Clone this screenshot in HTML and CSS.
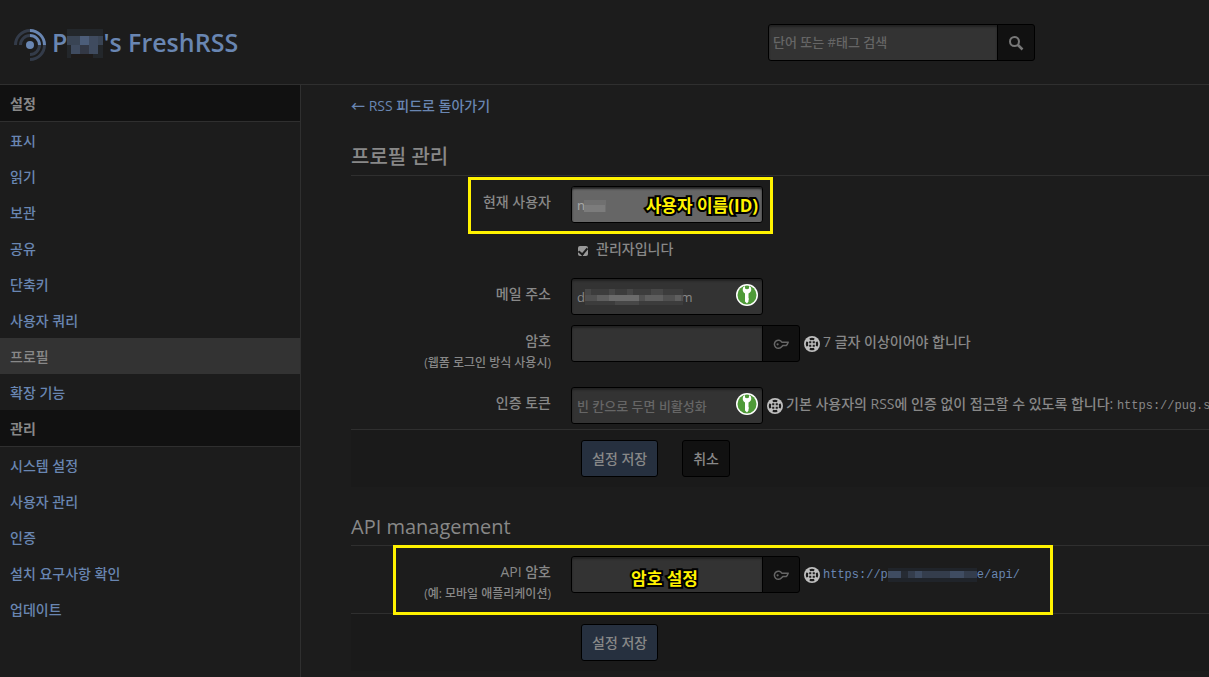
FILE: index.html
```html
<!DOCTYPE html>
<html lang="ko">
<head>
<meta charset="utf-8">
<title>프로필 관리</title>
<link rel="stylesheet" href="styles.css">
</head>
<body>
<svg class="defs" aria-hidden="true">
  <symbol id="i-help" viewBox="0 0 16 16">
    <circle cx="8" cy="8" r="8" fill="#bebebe"/>
    <g fill="#1c1c1c">
    <path d="M5.500 2.300Q8 1.200 10.500 2.300L10 4.300Q8 3.700 6 4.300zM5.500 13.700Q8 14.800 10.500 13.700L10 11.700Q8 12.300 6 11.700zM2.300 5.500Q1.200 8 2.300 10.500L4.300 10Q3.700 8 4.300 6zM13.700 5.500Q14.800 8 13.700 10.500L11.700 10Q12.300 8 11.700 6z"/>
    <path d="M5.200 5.200h2.100v2.100H5.200zM8.700 5.200h2.100v2.100H8.700zM5.200 8.700h2.100v2.100H5.200zM8.700 8.700h2.100v2.100H8.700z"/></g>
  </symbol>
  <symbol id="i-key" viewBox="0 0 16 16">
    <path d="M8.800 6.200A4 4 0 1 0 8.600 10.700L9.800 9.600h3.400l1-1.200 1-2.200z" fill="none" stroke="#666" stroke-width="1.500" stroke-linejoin="round"/>
    <circle cx="4.600" cy="8.300" r="1.100" fill="#666"/>
  </symbol>
  <symbol id="i-keepass" viewBox="0 0 22 22">
    <circle cx="11" cy="11" r="11" fill="#fff"/>
    <circle cx="11" cy="11" r="9.500" fill="#4f9a38"/>
    <path d="M7 3.500Q6 8 9 9.500V17.500L11 19.500L12.500 17.500V16L13 15L12.500 14V9.500Q16 8 15 3.500L13 2V4.500Q11 6 9 4.500V2z" fill="#fff"/>
  </symbol>
</svg>

<header class="header">
  <h1 class="title"><a href="#">
    <svg class="logo" viewBox="0 0 32 32" aria-hidden="true">
      <circle cx="16" cy="16" r="4" fill="#6986b2"/>
      <g fill="none" stroke-width="3" stroke="#6986b2">
        <path d="M16 6.500A9.500 9.500 0 0 1 25.500 16M16 1.500A14.500 14.500 0 0 1 30.500 16"/>
        <path opacity=".3" d="M6.500 16A9.500 9.500 0 0 1 16 6.500M1.500 16A14.500 14.500 0 0 1 16 1.500M16 25.500A9.500 9.500 0 0 0 25.500 16M16 30.500A14.500 14.500 0 0 0 30.500 16"/>
      </g>
    </svg>
    <span>P<svg class="mosaic-title" viewBox="0 0 36 29" aria-hidden="true"><path fill="#23272b" d="M0 0h36v29H0z"/><path fill="#1e1b1a" d="M4 25h22v4H4z"/><path fill="#394454" d="M0 7h36v9H0z"/><path fill="#3f4b5f" d="M4 16h9v9H4zM22 7h9v18h-9z"/><path fill="#333845" d="M13 16h9v9h-9z"/><path fill="#4c5d79" d="M13 7h9v9h-9z"/></svg>'s FreshRSS</span>
  </a></h1>
  <form class="search stick">
    <input type="search" class="search-box" placeholder="단어 또는 #태그 검색" aria-label="검색">
    <button type="button" class="btn icon-btn" aria-label="검색"><svg class="icon" viewBox="0 0 16 16"><circle cx="6.500" cy="6.500" r="4.500" fill="none" stroke="#777" stroke-width="2"/><path d="M10 10l4.500 4.500" stroke="#777" stroke-width="2.500"/></svg></button>
  </form>
</header>

<div class="page">
  <nav class="aside">
    <h2 class="nav-head">설정</h2>
    <a href="#">표시</a>
    <a href="#">읽기</a>
    <a href="#">보관</a>
    <a href="#">공유</a>
    <a href="#">단축키</a>
    <a href="#">사용자 쿼리</a>
    <a href="#" class="active">프로필</a>
    <a href="#">확장 기능</a>
    <h2 class="nav-head">관리</h2>
    <a href="#">시스템 설정</a>
    <a href="#">사용자 관리</a>
    <a href="#">인증</a>
    <a href="#">설치 요구사항 확인</a>
    <a href="#">업데이트</a>
  </nav>

  <main class="main">
    <a href="#" class="back">← RSS 피드로 돌아가기</a>

    <form class="section">
      <h2 class="legend">프로필 관리</h2>
      <div class="group">
        <label class="name" for="user">현재 사용자</label>
        <div class="controls">
          <div class="field">
            <input id="user" class="text" type="text" value="n" disabled>
            <svg class="mosaic-user" viewBox="0 0 22 12" aria-hidden="true"><path fill="#707070" d="M0 0h22v12H0z"/><path fill="#7c7c7c" d="M0 5h21v7H0z"/></svg>
            <span class="note note-end">사용자 이름(ID)</span>
          </div>
        </div>
        <div class="mark mark-user"></div>
      </div>
      <div class="group">
        <label class="check"><input type="checkbox" class="box" checked disabled>관리자입니다</label>
      </div>
      <div class="group">
        <label class="name" for="mail">메일 주소</label>
        <div class="controls">
          <div class="field">
            <input id="mail" class="text" type="text" value="d&nbsp;&nbsp;&nbsp;&nbsp;&nbsp;&nbsp;&nbsp;&nbsp;&nbsp;&nbsp;&nbsp;&nbsp;&nbsp;&nbsp;&nbsp;&nbsp;&nbsp;&nbsp;&nbsp;&nbsp;&nbsp;&nbsp;&nbsp;&nbsp;&nbsp;&nbsp;om">
            <svg class="mosaic-mail" viewBox="0 0 98 16" aria-hidden="true"><path fill="#3c3c3c" d="M0 0h98v16H0z"/><path fill="#474747" d="M0 0h6v12H0zM24 0h6v6h-6zM42 0h6v6h-6zM66 0h12v6H66zM30 12h24v4H30z"/><path fill="#505050" d="M0 6h98v6H0z"/><path fill="#5e5e5e" d="M12 6h12v6H12zM60 6h18v6H60zM90 6h6v6h-6z"/><path fill="#6b6b6b" d="M24 6h30v6H24z"/></svg>
            <svg class="keepass"><use href="#i-keepass"/></svg>
          </div>
        </div>
      </div>
      <div class="group">
        <label class="name" for="pass">암호<small>(웹폼 로그인 방식 사용시)</small></label>
        <div class="controls">
          <div class="field stick">
            <input id="pass" class="text" type="password">
            <button type="button" class="btn icon-btn" aria-label="암호 보기"><svg class="icon"><use href="#i-key"/></svg></button>
          </div>
          <p class="help"><svg class="icon"><use href="#i-help"/></svg><span>7 글자 이상이어야 합니다</span></p>
        </div>
      </div>
      <div class="group">
        <label class="name" for="token">인증 토큰</label>
        <div class="controls">
          <div class="field">
            <input id="token" class="text" type="text" placeholder="빈 칸으로 두면 비활성화">
            <svg class="keepass"><use href="#i-keepass"/></svg>
          </div>
          <p class="help"><svg class="icon"><use href="#i-help"/></svg><span>기본 사용자의 RSS에 인증 없이 접근할 수 있도록 합니다: <kbd>https://pug.s</kbd></span></p>
        </div>
      </div>
      <div class="actions">
        <button type="button" class="btn primary">설정 저장</button>
        <button type="button" class="btn">취소</button>
      </div>
    </form>

    <form class="section">
      <h2 class="legend">API management</h2>
      <div class="group">
        <label class="name" for="api">API 암호<small>(예: 모바일 애플리케이션)</small></label>
        <div class="controls">
          <div class="field stick">
            <input id="api" class="text" type="password">
            <button type="button" class="btn icon-btn" aria-label="암호 보기"><svg class="icon"><use href="#i-key"/></svg></button>
            <span class="note note-mid">암호 설정</span>
          </div>
          <p class="help"><svg class="icon"><use href="#i-help"/></svg><a href="#"><kbd>https://p<svg class="mosaic-url" viewBox="0 0 89 14" aria-hidden="true"><path fill="#20242a" d="M0 0h89v14H0z"/><path fill="#343d4c" d="M0 3h89v7H0z"/><path fill="#262b33" d="M13 3h7v7h-7z"/><path fill="#3f4c61" d="M0 3h13v7H0zM27 3h7v7h-7zM62 3h14v7H62z"/></svg>e/api/</kbd></a></p>
        </div>
        <div class="mark mark-api"></div>
      </div>
      <div class="actions">
        <button type="button" class="btn primary">설정 저장</button>
      </div>
    </form>
  </main>
</div>
</body>
</html>
```
FILE: styles.css
```css
* { box-sizing: border-box; }
body {
  margin: 0;
  min-height: 100vh;
  display: flex;
  flex-direction: column;
  overflow: hidden;
  background: #1c1c1c;
  color: #888;
  font: 500 14px/22px "Open Sans", "Noto Sans CJK KR", sans-serif;
}
.defs { position: absolute; width: 0; height: 0; }
a { color: #6986b2; text-decoration: none; }
h1, h2, p { margin: 0; }
input, button { font-family: inherit; font-weight: inherit; }
svg { flex: none; }

.header {
  display: flex;
  align-items: center;
  justify-content: space-between;
  height: 85px;
  padding: 0 174px 0 14px;
  border-bottom: 1px solid #2f2f2f;
}
.title { font-size: 25px; font-weight: 600; line-height: 36px; }
.title a { display: flex; align-items: flex-start; gap: 6px; }
.logo { width: 32px; height: 32px; margin-top: 5px; }
.mosaic-title { width: 36px; height: 29px; vertical-align: -6px; }
.stick { display: flex; }

.text, .search-box {
  width: 192px;
  height: 37px;
  margin: 0;
  padding: 0 5px;
  border: 1px solid #000;
  border-radius: 3px;
  background: #333;
  box-shadow: inset 0 2px 2px #222;
  color: #888;
  font-size: 13px;
  outline: 0;
}
.search-box { width: 230px; padding: 0 4px; }
.text:disabled { background: #666; color: #aaa; }
::placeholder { color: #666; opacity: 1; }
.stick input { border-radius: 3px 0 0 3px; }
.btn {
  height: 37px;
  padding: 0 10px 2px;
  border: 1px solid #000;
  border-radius: 3px;
  background: #111;
  color: #888;
  font-size: 14px;
}
.primary { background: #26303f; }
.icon-btn {
  width: 38px;
  margin-left: -1px;
  border-radius: 0 3px 3px 0;
}
.icon { width: 16px; height: 16px; vertical-align: middle; }

.page { display: flex; flex: 1; }
.aside {
  flex: none;
  width: 301px;
  border-right: 1px solid #2f2f2f;
}
.aside a, .nav-head {
  display: block;
  padding: 2px 10px 0;
  font-size: 14px;
  line-height: 34px;
}
.nav-head {
  background: #111;
  border-bottom: 1px solid #2f2f2f;
  font-weight: 700;
}
.aside .active { background: #333; color: #888; }

.main { flex: 1; min-width: 0; padding: 10px 0 0 50px; }
.back { display: block; margin-bottom: 22px; }
.section { margin-bottom: 22px; }
.legend {
  margin-bottom: 5px;
  border-bottom: 1px solid #2f2f2f;
  font-size: 20px;
  font-weight: 500;
  line-height: 36px;
}
.group {
  position: relative;
  display: grid;
  grid-template-columns: 200px 1fr;
  column-gap: 20px;
  min-height: 45px;
  padding: 5px 0;
}
.name { padding: 5px 0 3px; text-align: right; }
.name small { display: block; font-size: 12px; }
.controls { display: flex; align-items: flex-start; gap: 4px; }
.field { position: relative; flex: none; }
.check {
  grid-column: 2;
  display: flex;
  align-items: center;
  gap: 8px;
  height: 32px;
  padding-left: 7px;
}
.box {
  appearance: none;
  width: 10px;
  height: 10px;
  margin: 4px 0 0;
  border-radius: 2px;
  background: #999;
}
.box::after {
  content: "";
  display: block;
  width: 4px;
  height: 7px;
  margin: 0 auto;
  border: solid #1c1c1c;
  border-width: 0 2px 2px 0;
  transform: rotate(40deg);
}
.help {
  display: flex;
  align-items: flex-start;
  gap: 3px;
  padding-top: 6px;
  white-space: nowrap;
}
.help .icon { margin-top: 5px; }
kbd { font: 12px "Liberation Mono", monospace; }

.keepass { position: absolute; top: 6px; right: 5px; width: 22px; height: 22px; }
.mosaic-user { position: absolute; left: 13px; top: 14px; width: 22px; height: 12px; }
.mosaic-mail { position: absolute; left: 14px; top: 11px; width: 98px; height: 16px; }
.mosaic-url { width: 89px; height: 14px; vertical-align: middle; }
.note {
  position: absolute;
  top: 9px;
  color: #fff200;
  font-size: 17px;
  font-weight: 700;
  white-space: nowrap;
  -webkit-text-stroke: 4px #000;
  paint-order: stroke fill;
}
.note-end { right: 5px; }
.note-mid { left: 60px; top: 12px; }
.mark { position: absolute; border: 3px solid #fff200; pointer-events: none; }
.mark-user { left: 117px; top: -4px; width: 305px; height: 57px; }
.mark-api { left: 42px; top: -6px; width: 660px; height: 70px; }

.actions {
  display: flex;
  gap: 24px;
  padding: 10px 0 10px 230px;
  border-top: 1px solid #2f2f2f;
  background: #1a1a1a;
}
```
